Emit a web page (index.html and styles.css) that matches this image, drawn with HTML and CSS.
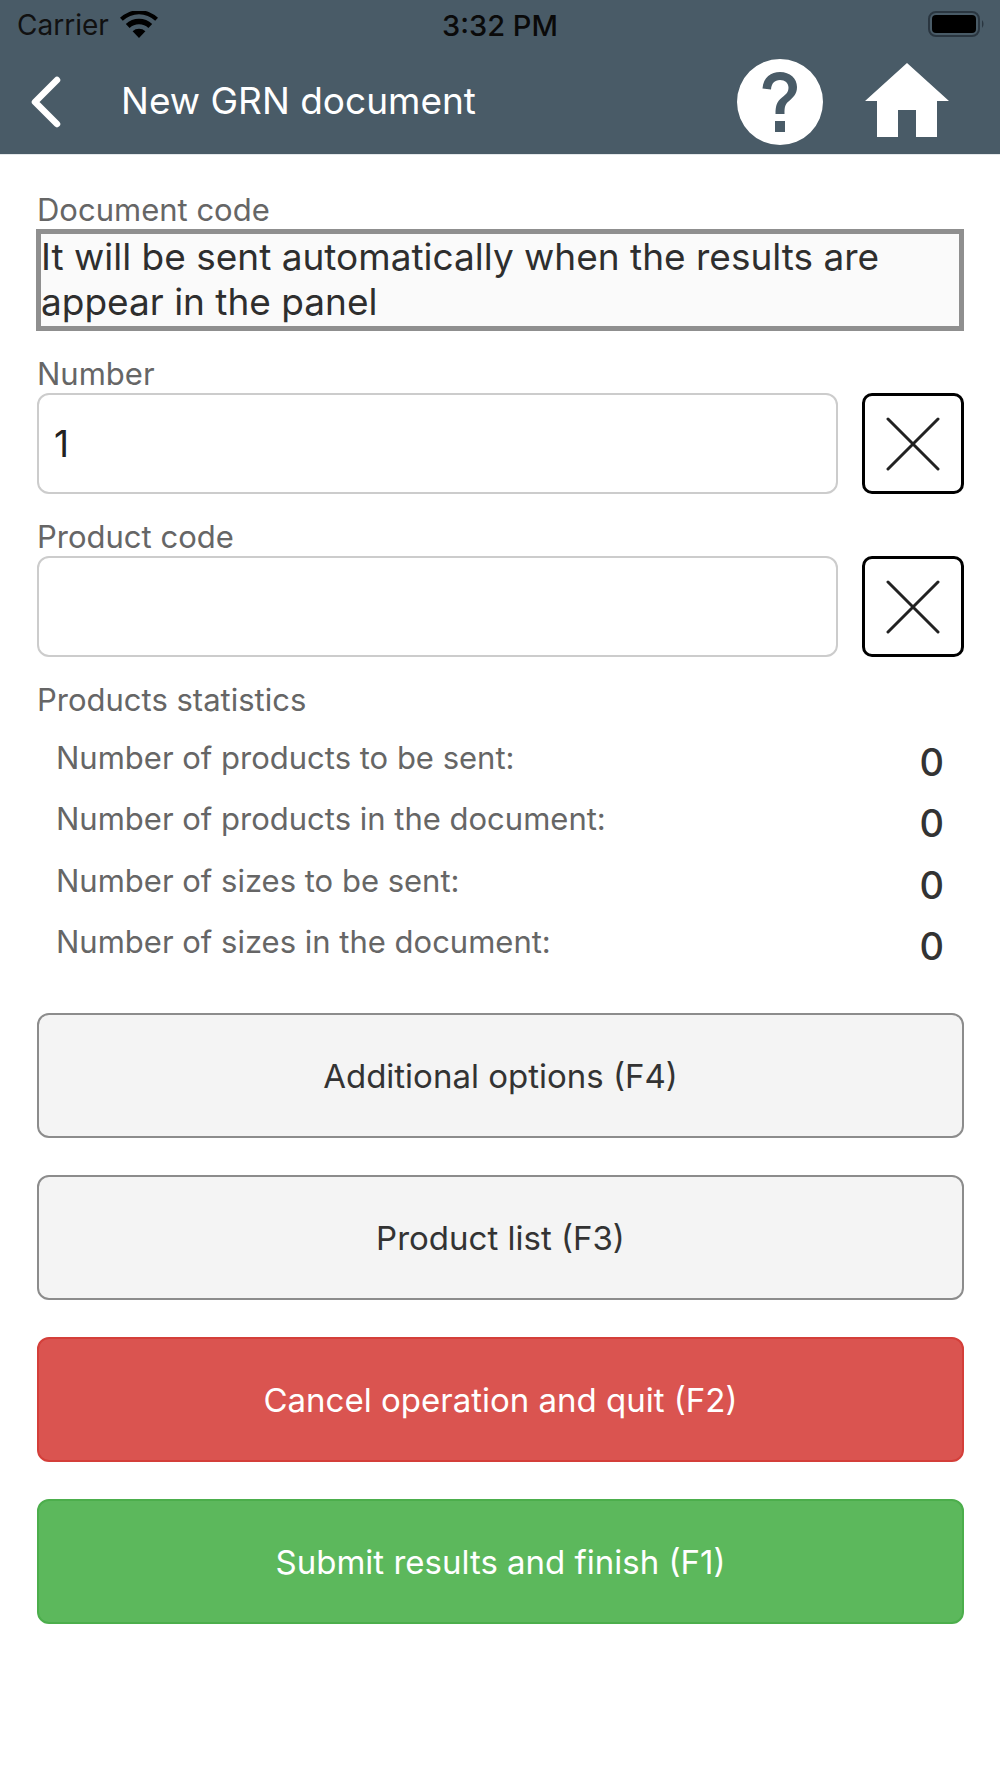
FILE: index.html
```html
<!DOCTYPE html>
<html lang="en">
<head>
<meta charset="utf-8">
<title>New GRN document</title>
<link rel="stylesheet" href="styles.css">
</head>
<body>
<header class="head">
  <div class="status">
    <div class="status-left">
      <span class="carrier">Carrier</span>
      <svg class="wifi" viewBox="0 0 38 28" width="38" height="28"><path d="M19 27 L12.6 20.200 A9.500 9.500 0 0 1 25.400 20.200 Z M9.600 17 L5.800 13 A19 19 0 0 1 32.200 13 L28.400 17 A13.600 13.600 0 0 0 9.600 17 Z M2.800 9.800 L0 6.800 A27.500 27.500 0 0 1 38 6.800 L35.200 9.800 A23.400 23.400 0 0 0 2.800 9.800 Z" fill="#000"/></svg>
    </div>
    <span class="time">3:32 PM</span>
    <svg class="battery" viewBox="0 0 60 28" width="60" height="28"><rect x="2" y="2" width="50" height="24" rx="7" fill="none" stroke="#2a3640" stroke-width="2"/><rect x="5" y="5" width="44" height="18" rx="4" fill="#000"/><path d="M55 10 a6 6 0 0 1 0 8 Z" fill="#2a3640"/></svg>
  </div>
  <div class="nav">
    <svg class="back" viewBox="0 0 34 54" width="34" height="54"><path d="M28 5 L6 27 L28 49" fill="none" stroke="#fff" stroke-width="6.500" stroke-linecap="round" stroke-linejoin="round"/></svg>
    <h1 class="title">New GRN document</h1>
    <svg class="help" viewBox="0 0 86 86" width="86" height="86"><path fill-rule="evenodd" fill="#fff" d="M43 0a43 43 0 1 0 0 86a43 43 0 1 0 0-86Z M25.500 29.500C26.500 18 34 13 43 13C53 13 60 19.500 60 28C60 35.500 55.500 39 51.500 42.500C48 45.500 47.500 48 47.500 55H38.500C38.500 46.500 40 42.500 45 38.500C49.500 35 51.500 33 51.500 28.500C51.500 24 48 21 43 21C37.500 21 34.500 24.500 34 30.500Z M38 62H48V73H38Z"/></svg>
    <svg class="home" viewBox="0 0 86 74" width="86" height="74"><path fill="#fff" d="M43 0 L85 38 H73 V74 H52 V47 H34 V74 H13 V38 H1 Z"/></svg>
  </div>
</header>
<main class="form">
  <section class="field">
    <label class="label">Document code</label>
    <div class="readonly">It will be sent automatically when the results are appear in the panel</div>
  </section>
  <section class="field">
    <label class="label">Number</label>
    <div class="input-row">
      <div class="input">1</div>
      <button class="clear"><svg viewBox="0 0 54 54" width="54" height="54"><path d="M2 2 L52 52 M52 2 L2 52" stroke="#222" stroke-width="3" stroke-linecap="round"/></svg></button>
    </div>
  </section>
  <section class="field">
    <label class="label">Product code</label>
    <div class="input-row">
      <div class="input"></div>
      <button class="clear"><svg viewBox="0 0 54 54" width="54" height="54"><path d="M2 2 L52 52 M52 2 L2 52" stroke="#222" stroke-width="3" stroke-linecap="round"/></svg></button>
    </div>
  </section>
  <section class="stats">
    <div class="label">Products statistics</div>
    <div class="stat"><span>Number of products to be sent:</span><b>0</b></div>
    <div class="stat"><span>Number of products in the document:</span><b>0</b></div>
    <div class="stat"><span>Number of sizes to be sent:</span><b>0</b></div>
    <div class="stat"><span>Number of sizes in the document:</span><b>0</b></div>
  </section>
  <div class="actions">
    <button class="btn">Additional options (F4)</button>
    <button class="btn">Product list (F3)</button>
    <button class="btn red">Cancel operation and quit (F2)</button>
    <button class="btn green">Submit results and finish (F1)</button>
  </div>
</main>
</body>
</html>
```
FILE: styles.css
```css
* { box-sizing: border-box; }
html, body { margin: 0; padding: 0; }
body { background: #fff; font-family: Inter, "Liberation Sans", sans-serif; color: #333; width: 1000px; height: 1778px; overflow: hidden; }
.head { background: #495b67; height: 155px; border-bottom: 1px solid #e4e8ea; }
.status { height: 50px; display: flex; align-items: center; justify-content: space-between; padding: 0 13px 0 17px; position: relative; }
.status-left { display: flex; align-items: center; gap: 11px; }
.carrier { font-size: 28px; color: #111; }
.wifi { flex: none; }
.battery { margin-top: -2px; }
.time { font-size: 29px; font-weight: 500; color: #0a0a0a; position: absolute; left: 0; right: 0; text-align: center; }
.nav { display: flex; align-items: center; height: 104px; padding-left: 29px; }
.back { flex: none; }
.title { flex: 1; margin: 0 0 4px 58px; font-size: 37px; font-weight: 400; color: #fff; }
.help { margin-right: 41px; flex: none; }
.home { margin-right: 50px; flex: none; margin-bottom: 5px; }
.form { padding: 38px 36px 0 37px; }
.field { margin-bottom: 26px; }
.label { display: block; color: #666; font-size: 31px; line-height: 34px; padding-bottom: 2px; }
.readonly { height: 102px; margin-left: -1px; border: 5px solid #8f8f8f; background: #fafafa; color: #2e2e2e; font-size: 37px; line-height: 45px; padding: 0; }
.input-row { display: flex; gap: 24px; }
.input { flex: 1; height: 101px; border: 2px solid #ccc; border-radius: 12px; background: #fff; font-size: 37px; line-height: 97px; color: #222; padding-left: 15px; }
.clear { flex: none; width: 102px; height: 101px; background: #fff; border: 3px solid #000; border-radius: 10px; padding: 0; display: flex; align-items: center; justify-content: center; }
.stat { display: flex; justify-content: space-between; padding: 0 20px 0 19px; height: 61.3px; align-items: flex-start; }
.stats .label { margin-bottom: 18px; }
.stat span { color: #666; font-size: 31px; line-height: 42px; }
.stat b { color: #333; font-size: 38px; font-weight: 500; line-height: 50px; }
.actions { margin-top: 31px; display: flex; flex-direction: column; gap: 37px; }
.btn { height: 125px; border: 2px solid #8c8c8c; border-radius: 12px; background: #f4f4f4; color: #333; font: 400 33px Inter, "Liberation Sans", sans-serif; }
.red { background: #da5450; border-color: #d43f3a; color: #fff; }
.green { background: #5cb85c; border-color: #4cae4c; color: #fff; }
```
